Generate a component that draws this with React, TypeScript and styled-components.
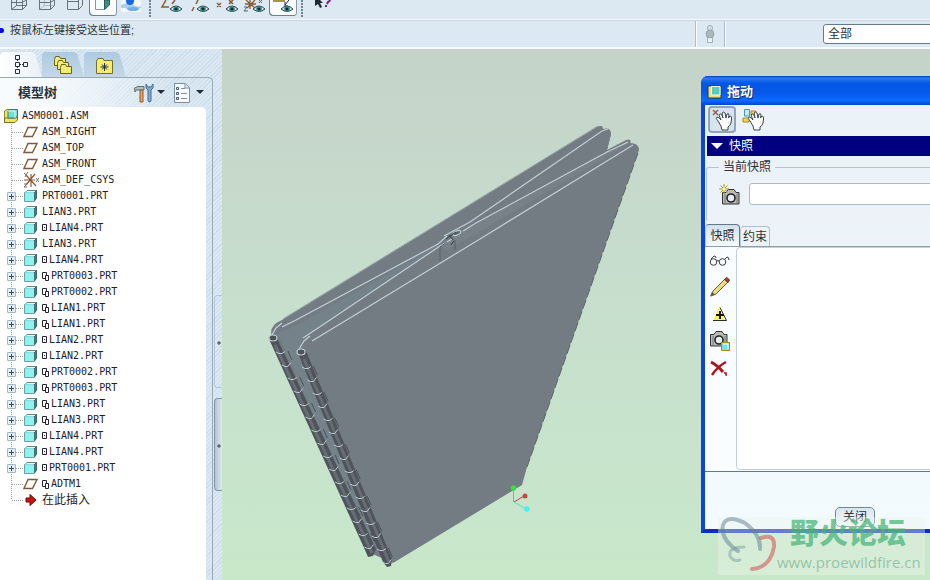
import React from "react";
import styled, { createGlobalStyle, css } from "styled-components";

const GlobalStyle = createGlobalStyle`
  * { box-sizing: border-box; }
  body {
    margin: 0;
    overflow: hidden;
    font: 12px/16px "Liberation Sans", "Noto Sans CJK SC", sans-serif;
    color: #2b333c;
  }
  button, input, select { font: inherit; color: inherit; }
`;

const stripes = css`
  background: repeating-linear-gradient(135deg, #cddfec 0 1px, #dbe8f2 1px 3px);
`;

const Shell = styled.div`
  display: flex;
  flex-direction: column;
  height: 100vh;
  overflow: hidden;
  background: #dce8f2;
`;

const Toolbar = styled.div`
  display: flex;
  height: 20px;
  flex: none;
  padding-left: 5px;
  border-bottom: 1px solid #f8fbfd;
`;

const ToolButton = styled.button<{ $pressed?: boolean }>`
  display: block;
  width: 28px;
  height: 16px;
  padding: 0;
  border: 0;
  border-radius: 0 0 4px 4px;
  background: ${(p) => (p.$pressed ? "#fbfdfe" : "transparent")};
  box-shadow: ${(p) => (p.$pressed ? "inset 1px -1px #6f8191, inset -1px 0 #8798a6" : "none")};
  svg { display: block; }
`;

const Grip = styled.span`
  width: 12px;
  height: 17px;
  background: radial-gradient(circle at 5px 1px, #6f8292 1px, transparent 1px) 0 0 / 12px 3px;
`;

const MessageBar = styled.div`
  display: flex;
  align-items: center;
  height: 29px;
  flex: none;
  border-top: 1px solid #c5d4e0;
  border-bottom: 2px solid #f8fbfd;
`;

const Message = styled.p`
  display: flex;
  align-items: center;
  flex: 1;
  gap: 6px;
  margin: 0;
  padding-bottom: 8px;
  font-size: 11px;
  &::before {
    content: "";
    width: 4px;
    height: 5px;
    border-radius: 0 3px 3px 0;
    background: #0a0ad0;
  }
`;

const FilterArea = styled.div`
  display: flex;
  align-items: center;
  width: 235px;
  height: 100%;
`;

const RegenStatus = styled.div`
  display: flex;
  align-items: center;
  justify-content: center;
  flex: none;
  width: 30px;
  height: 100%;
  border: 1px solid #aebdc9;
  border-width: 0 1px;
  box-shadow: inset 1px 0 #fff, 1px 0 #fff;
`;

const FilterSelect = styled.select`
  flex: none;
  width: 140px;
  height: 20px;
  margin-left: 98px;
  padding: 0 4px;
  appearance: none;
  border: 1px solid #64798a;
  border-radius: 3px;
  background: #fff;
`;

const Workspace = styled.div`
  display: flex;
  flex: 1;
  min-height: 0;
`;

const Navigator = styled.aside`
  display: flex;
  flex: none;
  width: 222px;
  ${stripes}
`;

const NavMain = styled.div`
  display: flex;
  flex-direction: column;
  width: 213px;
`;

const NavTabs = styled.div`
  display: flex;
  height: 28px;
  padding-top: 3px;
`;

const NavTab = styled.button<{ $active?: boolean }>`
  width: 42px;
  padding: 0 10px 0 12px;
  border: 0;
  clip-path: polygon(0 0, 76% 0, 84% 8%, 100% 100%, 0 100%);
  border-radius: 4px 0 0 0;
  background: ${(p) =>
    p.$active ? "linear-gradient(90deg, #fff, #e9f0f6)" : "linear-gradient(#aecae0, #c4d8e7)"};
  svg { display: block; }
`;

const NavPanel = styled.div`
  display: flex;
  flex-direction: column;
  flex: 1;
  min-height: 0;
  padding-right: 6px;
  border: 1px solid #98aaba;
  border-width: 1px 1px 0 0;
  border-radius: 0 5px 0 0;
`;

const NavHeader = styled.header`
  display: flex;
  align-items: center;
  gap: 8px;
  height: 29px;
  flex: none;
  padding: 0 2px 0 18px;
  background: linear-gradient(90deg, #f8fbfd 20%, transparent 80%);
`;

const NavTitle = styled.h1`
  flex: 1;
  margin: 0;
  font-size: 13px;
  line-height: 16px;
`;

const MenuButton = styled.button`
  display: flex;
  align-items: center;
  gap: 3px;
  padding: 0;
  border: 0;
  background: none;
`;

const Tree = styled.ul`
  flex: 1;
  margin: 0;
  padding: 1px 0 0;
  list-style: none;
  border-radius: 0 5px 0 0;
  background: #fff;
`;

const TreeItem = styled.li<{ $root?: boolean; $last?: boolean }>`
  display: flex;
  align-items: center;
  height: 16px;
  padding-left: ${(p) => (p.$root ? "4px" : "7px")};
  font-family: "DejaVu Sans Mono", "Noto Sans CJK SC", monospace;
  white-space: nowrap;
  color: #1e2228;
  background: ${(p) =>
    p.$root
      ? "none"
      : `repeating-linear-gradient(#a0a0a0 0 1px, transparent 1px 2px) 11px 0 / 1px ${p.$last ? "8px" : "16px"} no-repeat,
         repeating-linear-gradient(90deg, #a0a0a0 0 1px, transparent 1px 2px) 12px 8px / 11px 1px no-repeat`};
`;

const ExpandSlot = styled.span`
  display: flex;
  width: 16px;
`;

const ExpandButton = styled.button`
  display: block;
  width: 9px;
  height: 9px;
  padding: 0;
  border: 1px solid #9db6ca;
  border-radius: 1px;
  background:
    linear-gradient(#3a4853, #3a4853) 1px 3px / 5px 1px no-repeat,
    linear-gradient(#3a4853, #3a4853) 3px 1px / 1px 5px no-repeat,
    #e3eef5;
`;

const NodeIcon = styled.span<{ $root?: boolean }>`
  width: ${(p) => (p.$root ? "18px" : "19px")};
  height: 16px;
  flex: none;
  svg { display: block; }
`;

const Marker = styled.svg`
  flex: none;
  margin-right: 1px;
`;

const NodeText = styled.span<{ $cjk?: boolean }>`
  font-size: ${(p) => (p.$cjk ? "12px" : "10px")};
  line-height: 16px;
`;

const Sash = styled.div`
  display: flex;
  flex-direction: column;
  align-items: flex-end;
  flex: 1;
  gap: 10px;
  padding-top: 246px;
`;

const SashHandle = styled.button<{ $solid?: boolean }>`
  width: 8px;
  height: 93px;
  padding: 0;
  border: 1px solid ${(p) => (p.$solid ? "#8496a6" : "#b3c8da")};
  border-right: 0;
  border-radius: 4px 0 0 4px;
  background:
    radial-gradient(circle at 4px 47px, #dfe9f2 0, #26323c 1px, transparent 2px),
    ${(p) => (p.$solid ? "linear-gradient(90deg, #b4c4d2, #dce8f1)" : "none")};
`;

const Viewport = styled.main`
  position: relative;
  flex: 1;
  overflow: hidden;
  background: linear-gradient(#c5d3c9, #c7dfcd 50%, #c8e8ca);
`;

const Model = styled.svg`
  position: absolute;
  left: 38px;
  top: 61px;
`;

const Dialog = styled.section`
  position: absolute;
  left: 479px;
  top: 27px;
  width: 308px;
  border: 4px solid #0a3fd0;
  border-top: 0;
  border-left-color: #0b45dd;
  border-bottom-color: #0a2fb8;
  border-radius: 7px 7px 0 0;
  background: linear-gradient(#eaf1f7, #eef4f9 50%, #f4fbff);
`;

const DialogTitle = styled.header`
  display: flex;
  align-items: center;
  gap: 5px;
  height: 29px;
  margin: 0 -4px;
  padding: 2px 6px 0;
  border-radius: 7px 7px 0 0;
  background: linear-gradient(#0a3fc0 0, #2b7cf5 8%, #0456e4 25%, #0558ea 55%, #0a6bff 85%, #0343c8);
  color: #fff;
  h2 {
    margin: 0;
    font-size: 13px;
    line-height: 20px;
    text-shadow: 1px 1px #0a2a80;
  }
`;

const DialogTools = styled.div`
  display: flex;
  gap: 4px;
  padding: 1px 3px 3px;
`;

const HandButton = styled.button<{ $pressed?: boolean }>`
  width: 28px;
  height: 27px;
  padding: 0;
  border: ${(p) => (p.$pressed ? "2px solid #8fa5b5" : "2px solid transparent")};
  border-radius: 4px;
  background: ${(p) => (p.$pressed ? "#d5e4ef" : "none")};
  svg { display: block; }
`;

const SectionToggle = styled.button`
  display: flex;
  align-items: center;
  gap: 6px;
  width: calc(100% - 4px);
  height: 20px;
  margin-left: 2px;
  padding: 0 4px;
  border: 0;
  background: #000080;
  color: #fff;
`;

const CurrentGroup = styled.fieldset`
  display: flex;
  align-items: center;
  height: 62px;
  margin: 3px 2px 3px 1px;
  padding: 0 6px 8px 12px;
  border: 1px solid #b4c5d2;
  border-width: 1px 1px 0;
  border-radius: 3px;
  legend {
    padding: 0 4px;
  }
`;

const CameraButton = styled.button`
  width: 30px;
  padding: 0;
  border: 0;
  background: none;
  svg { display: block; }
`;

const SnapshotInput = styled.input`
  flex: 1;
  min-width: 0;
  height: 22px;
  border: 1px solid #a5bccb;
  border-radius: 3px;
  background: #fff;
`;

const TabRow = styled.div`
  display: flex;
  align-items: flex-end;
  height: 22px;
`;

const SnapTab = styled.button<{ $active?: boolean }>`
  width: ${(p) => (p.$active ? "35px" : "30px")};
  height: ${(p) => (p.$active ? "22px" : "20px")};
  padding: 0 2px;
  border: 1px solid ${(p) => (p.$active ? "#5f7a8d" : "#a9bdca")};
  border-bottom: 0;
  border-left-color: #b8cad6;
  border-radius: 4px 4px 0 0;
  background: ${(p) => (p.$active ? "linear-gradient(#d3e0ea, #f4f9fc)" : "#edf3f8")};
`;

const TabPanel = styled.div`
  display: flex;
  height: 226px;
  padding-top: 1px;
  border-bottom: 1px solid #5f7a8d;
  background: #fafdff;
  box-shadow: inset 0 1px #8ba0af;
`;

const ActionColumn = styled.div`
  display: flex;
  flex-direction: column;
  width: 31px;
`;

const ActionButton = styled.button`
  width: 30px;
  height: 27px;
  padding: 0 0 2px 4px;
  border: 0;
  background: none;
  svg { display: block; }
`;

const SnapshotList = styled.ul`
  flex: 1;
  margin: 0 0 1px;
  padding: 0;
  list-style: none;
  border: 1px solid #c1d0da;
  border-radius: 4px;
  background: #fff;
`;

const DialogFooter = styled.footer`
  display: flex;
  justify-content: center;
  padding: 35px 0 2px;
`;

const CloseButton = styled.button`
  width: 40px;
  height: 20px;
  padding: 0;
  border: 1px solid #71879a;
  border-radius: 5px;
  background: linear-gradient(#d9e5ee, #f6fafc);
`;

const Watermark = styled.div`
  position: absolute;
  right: 5px;
  bottom: 5px;
  display: flex;
  width: 207px;
  height: 58px;
  background: rgba(235, 245, 235, 0.4);
  svg { flex: none; }
`;

const WatermarkText = styled.div`
  display: flex;
  flex-direction: column;
  strong {
    padding-left: 13px;
    font: 900 29px/28px "Noto Sans CJK SC", sans-serif;
    color: rgba(70, 180, 120, 0.72);
  }
  span {
    font: 15px/34px "Open Sans", sans-serif;
    color: rgba(130, 180, 150, 0.75);
  }
`;

const Eye = ({ x = 15, y = 9 }: { x?: number; y?: number }) => (
  <g transform={`translate(${x} ${y})`}>
    <path d="M-6 0Q0-6 6 0Q0 5-6 0Z" fill="#d6e3e6" stroke="#2c4450" />
    <circle r="2.8" fill="#2f8580" />
    <circle r="1.3" fill="#0b2528" />
  </g>
);

const toolDrawings: Record<string, React.ReactNode> = {
  线框: <path d="M6.500 9.500V0M6.500 9.500H17.500V0M11.500 0V5.500H21.500V0M6.500 9.500L11.500 5.500M17.500 9.500L21.500 5.500M6.500 2.500H17.500L21 0" fill="none" stroke="#68737c" />,
  隐藏线: (
    <g fill="none" stroke="#68737c">
      <path d="M11.500 0V5.500H21M6.500 9.500L11.500 5.500" stroke="#b0bac2" />
      <path d="M6.500 0V9.500H17.500V0M17.500 9.500L21.500 5.500V0M6.500 2.500H17.500L21 0" />
    </g>
  ),
  消隐: <path d="M6.500 0V9.500H17.500V0M17.500 9.500L21.500 5.500V0M6.500 1.500H17.500" fill="none" stroke="#68737c" />,
  着色: (
    <g>
      <path d="M6.500 0V9.500H15.500V0" fill="#f7fcfa" stroke="#8a9599" />
      <path d="M15.500 0V9.500L20.500 5V0Z" fill="#3f8c7e" stroke="#2e5c58" />
    </g>
  ),
  增强: (
    <g>
      <path d="M4 0H24V12H4Z" fill="#f2f7fc" />
      <path d="M4 5Q10 2 16 5T24 6V8Q17 11 11 9T4 8Z" fill="#a9cdf0" />
      <circle cx="13" cy="1" r="4" fill="#1769df" />
      <ellipse cx="16" cy="9" rx="6" ry="2" fill="#6faeea" />
    </g>
  ),
  平面显示: (
    <g>
      <path d="M9 0L5 7H12M15 4L18 0" fill="none" stroke="#8b5a35" strokeWidth="1.5" />
      <Eye x={19} />
    </g>
  ),
  轴显示: (
    <g>
      <path d="M13 0L11 4M9 7L7 11" stroke="#8b5a35" strokeWidth="1.5" />
      <Eye x={18} />
    </g>
  ),
  点显示: (
    <g>
      <path d="M4 3L8 7M8 3L4 7M16 0L20 4M20 0L16 4" stroke="#8b5a35" strokeWidth="1.5" />
      <Eye x={19} />
    </g>
  ),
  坐标系显示: (
    <g>
      <path d="M4 4H15M9 0V9M5 0L14 8M14 0L6 8" stroke="#8b5a35" strokeWidth="1.3" />
      <path d="M3 7H6L3 11H7M18 0L21 3M21 0L18 3" fill="none" stroke="#59636a" />
      <Eye x={18} />
    </g>
  ),
  注释显示: (
    <g>
      <path d="M4 1H16" stroke="#a79b30" strokeWidth="2" />
      <path d="M20 0L16 5M16 2V6H19" fill="none" stroke="#202830" />
      <Eye x={18} />
    </g>
  ),
  帮助: (
    <g>
      <path d="M6 0V6L9 4L11 8L13 7L11 3H14L11 0Z" fill="#1d2830" />
      <path d="M21 0Q21 1 19 2L18 4M17 5V7" fill="none" stroke="#7a1a80" strokeWidth="2" />
    </g>
  ),
};

const Tool = ({ name, pressed }: { name: string; pressed?: boolean }) => (
  <ToolButton aria-label={name} aria-pressed={pressed} $pressed={pressed}>
    <svg width="28" height="16">{toolDrawings[name]}</svg>
  </ToolButton>
);

const Folder = ({ x, y }: { x: number; y: number }) => (
  <path d={`M${x}.5 ${y}.5l1-3h4l1 2h5v7h-11z`} fill="#f5ec78" stroke="#6b6420" />
);

type Kind = "plane" | "csys" | "part" | "insert" | "assembly";
const PartIcon = () => (
  <svg width="16" height="16">
    <path d="M1.500 5L4 2.500H13.500L11 5Z" fill="#d8fbfb" stroke="#5f8588" />
    <path d="M11 5L13.500 2.500V10.500L11 13.500Z" fill="#3f8186" stroke="#3d676b" />
    <path d="M1.500 4.500H11V13.500H1.500Z" fill="#8ef2f0" />
    <path d="M1.500 4.500V13.500H11" fill="none" stroke="#6ba3a6" />
  </svg>
);
const kindIcons: Record<Kind, React.ReactNode> = {
  assembly: (
    <svg width="16" height="16">
      <path d="M.5 3L3 1.500H6V14.500H.5Z" fill="#f2e552" stroke="#9b8d28" />
      <path d="M.5 10H12L13.500 8V12L11 14.500H.5Z" fill="#f2e552" stroke="#77702a" />
      <path d="M5 1.500H13.500V8L11 10H4V3Z" fill="#76ddd8" stroke="#3c7a7a" />
      <path d="M4 3H11V10" fill="none" stroke="#d5fbf6" />
    </svg>
  ),
  plane: (
    <svg width="16" height="16">
      <path d="M5 3.500H14L9.500 12.500H1Z" fill="#fffdf8" stroke="#80583e" strokeWidth="1.400" />
    </svg>
  ),
  csys: (
    <svg width="16" height="16">
      <path d="M1 8H12M8 2V15M3 3L13 14M12 2L3 13" stroke="#8d5734" strokeWidth="1.200" />
      <path d="M1 1L3 3L5 0M3 3L2 5M1 12H4L1 15H4M13 6L16 10M16 6L13 10" fill="none" stroke="#70757a" />
    </svg>
  ),
  part: <PartIcon />,
  insert: (
    <svg width="16" height="16">
      <path d="M3 6H7V2.500L13 8L7 13.500V10H3Z" fill="#d01010" stroke="#6e0808" />
    </svg>
  ),
};

type Mark = "single" | "double";
type Node = { name: string; kind: Kind; mark?: Mark };
const nodes: Node[] = [
  { name: "ASM_RIGHT", kind: "plane" },
  { name: "ASM_TOP", kind: "plane" },
  { name: "ASM_FRONT", kind: "plane" },
  { name: "ASM_DEF_CSYS", kind: "csys" },
  { name: "PRT0001.PRT", kind: "part" },
  { name: "LIAN3.PRT", kind: "part" },
  { name: "LIAN4.PRT", kind: "part", mark: "single" },
  { name: "LIAN3.PRT", kind: "part" },
  { name: "LIAN4.PRT", kind: "part", mark: "single" },
  { name: "PRT0003.PRT", kind: "part", mark: "double" },
  { name: "PRT0002.PRT", kind: "part", mark: "double" },
  { name: "LIAN1.PRT", kind: "part", mark: "double" },
  { name: "LIAN1.PRT", kind: "part", mark: "double" },
  { name: "LIAN2.PRT", kind: "part", mark: "single" },
  { name: "LIAN2.PRT", kind: "part", mark: "single" },
  { name: "PRT0002.PRT", kind: "part", mark: "double" },
  { name: "PRT0003.PRT", kind: "part", mark: "double" },
  { name: "LIAN3.PRT", kind: "part", mark: "double" },
  { name: "LIAN3.PRT", kind: "part", mark: "double" },
  { name: "LIAN4.PRT", kind: "part", mark: "single" },
  { name: "LIAN4.PRT", kind: "part", mark: "single" },
  { name: "PRT0001.PRT", kind: "part", mark: "single" },
  { name: "ADTM1", kind: "plane", mark: "double" },
  { name: "在此插入", kind: "insert" },
];

const PlacementMark = ({ mark }: { mark: Mark }) =>
  mark === "single" ? (
    <Marker width="6" height="8" fill="none" stroke="#20262c">
      <path d="M.5.5H4.500V6.500H.5Z" />
      <path d="M2 3.500H3" />
    </Marker>
  ) : (
    <Marker width="8" height="9" fill="none" stroke="#20262c">
      <path d="M3 6.500H.5V.5H4.500V3M3.500 3.500H6.500V8.500H3.500Z" />
    </Marker>
  );

const hinge = (x0: number, y0: number, slope: number) =>
  Array.from({ length: 16 }, (_, i) => {
    const y = y0 + i * 13;
    const x = x0 + (y - y0) * slope;
    return (
      <g key={i}>
        <path d={`M${x - 4} ${y - 1}l3 1.500h3l3-${i % 2 ? 4 : 2}`} fill="none" stroke="#bccad1" />
        {i % 2 === 1 && <path d={`M${x + 2} ${y - 15}l4 9`} stroke="#4a5258" />}
      </g>
    );
  });

const Assembly = () => (
  <Model width="390" height="470" viewBox="260 110 390 470" role="img" aria-label="装配模型">
    <path
      d="M272 337Q268 326 282 320L597 127Q603 124 603 129Q611 127 611 134L607 150L626 140Q632 138 630 143Q639 143 639 150L527 467L522 485L393 563L368 552Z"
      fill="#737b83"
    />
    <path d="M278 334L303 322L440 244L452 237L303 337L298 350L385 540L370 545Z" fill="#75828a" />
    <path d="M456 233L607 132L611 134L607 150L462 230Z" fill="#737b83" />
    <path d="M460 232L626 141L631 143L448 250L440 246Z" fill="#788187" />
    <path d="M269 339L277 338L376 549L373 556L368 557L365 550Z" fill="#4e545a" />
    <path d="M275 345L372 553" stroke="#666d74" strokeWidth="3" />
    <path d="M298 353L306 351L392 559L391 566L387 567L383 562Z" fill="#4e545a" />
    <path d="M304 359L389 562" stroke="#666d74" strokeWidth="3" />
    <path d="M638 153L527 467" fill="none" stroke="#5b646b" strokeDasharray="9 3" />
    {hinge(280, 353, 0.454)}
    {hinge(306, 368, 0.412)}
    <g fill="none" stroke="#c0cfd8" strokeWidth="1.200">
      <path d="M282 327L296 320L438 244L447 236M272 335L276 328L282 323" />
      <path d="M303 338L330 320L440 246L452 239M299 349L304 341L310 336" />
      <path d="M312 341L480 239L633 145" />
      <path d="M444 236L470 222L602 131L608 129" />
      <path d="M463 231L476 223L607 152L628 142" />
      <path d="M283 319L598 126" stroke="#8f9aa0" strokeWidth="1" />
      <ellipse cx="273" cy="338" rx="4" ry="3" fill="#4b545b" />
      <ellipse cx="301" cy="352" rx="4" ry="3" fill="#4b545b" />
      <ellipse cx="457" cy="233" rx="4" ry="2" transform="rotate(-25 457 233)" fill="#58636b" />
    </g>
    <path d="M440 261V247L447 242M455 250V240" fill="none" stroke="#58636b" />
    <path d="M449 235L453 240M451 245L454 241M446 239L456 232" fill="none" stroke="#343f47" />
    <path d="M513.500 502V489" stroke="#3ce04a" />
    <path d="M514 502L524 496" stroke="#b44448" />
    <path d="M514 502L526 509" stroke="#55dede" />
    <circle cx="513.500" cy="488" r="2.800" fill="#34e43c" />
    <circle cx="525" cy="496" r="2.500" fill="#d04448" />
    <circle cx="527" cy="509" r="2.800" fill="#48f2f4" />
  </Model>
);

const HandPath = () => (
  <path
    d="M8 13Q5 10 7 9Q9 9 11 12L9 7Q10 5 12 7L13 10L12 5Q14 3 15 5L16 10L17 6Q19 5 19 7L18.500 10L20 8Q22 8 21.500 11L21 15Q20 18 18 19V22H12L11 18Z"
    fill="#fffdfb"
    stroke="#3b454d"
  />
);

const Camera = ({ x = 0, y = 0 }: { x?: number; y?: number }) => (
  <g transform={`translate(${x} ${y})`}>
    <path d="M1.500 3.500H5L7 .5H13L15 3.500H18V15H1.500Z" fill="#bcbcb4" stroke="#30343a" />
    <path d="M4 5V14M16 5V14" stroke="#77786f" />
    <circle cx="10" cy="9" r="4" fill="#e9edef" stroke="#1f252b" strokeWidth="1.600" />
  </g>
);

const actionIcons: [string, React.ReactNode][] = [
  [
    "显示快照",
    <g fill="none" stroke="#3a3d40">
      <circle cx="4.500" cy="13" r="3.300" />
      <circle cx="13.500" cy="13" r="3.300" />
      <path d="M8 12Q9 11 10 12M2 10L5 7Q7 7 7 9M16 10L18 8Q20 8 20 11" />
    </g>,
  ],
  [
    "编辑快照",
    <g>
      <path d="M2 20L4 15L16 3L19 6L7 18Z" fill="#e9dc80" stroke="#6a6236" />
      <path d="M15.500 3.500L18 1.500L20.500 4L19 6.500Z" fill="#a5483f" stroke="#5d2522" />
      <path d="M1 20.500L3 16L6 18.500Z" fill="#5c584c" />
    </g>,
  ],
  [
    "锁定",
    <g>
      <path d="M10 4L16 18H4Z" fill="#f8f83c" />
      <path d="M11 4.500L17.500 17.500H4" fill="none" stroke="#2f301b" />
      <path d="M7 12H15M11 8V16" stroke="#14160c" strokeWidth="2" />
    </g>,
  ],
  [
    "绘图快照",
    <g>
      <Camera x={0} y={1} />
      <path d="M12.500 12.500H20.500V20.500H12.500Z" fill="#7ee3df" stroke="#9b8d28" />
      <path d="M14 14H19V19" fill="none" stroke="#eafffb" />
    </g>,
  ],
  [
    "删除",
    <g fill="none" stroke="#ad1518">
      <path d="M2 5Q8 8 14 15" strokeWidth="3" />
      <path d="M17 5Q9 9 3 18" strokeWidth="2.500" />
      <path d="M15 16H17V18H18" strokeWidth="1.500" />
    </g>,
  ],
];

const Caret = () => (
  <svg width="8" height="5">
    <path d="M0 0H8L4 4Z" fill="#1f2c36" />
  </svg>
);

export default function App() {
  return (
    <Shell>
      <GlobalStyle />
      <Toolbar>
        <Tool name="线框" />
        <Tool name="隐藏线" />
        <Tool name="消隐" />
        <Tool name="着色" pressed />
        <Tool name="增强" />
        <Grip />
        <Tool name="平面显示" />
        <Tool name="轴显示" />
        <Tool name="点显示" />
        <Tool name="坐标系显示" />
        <Tool name="注释显示" pressed />
        <Grip />
        <Tool name="帮助" />
      </Toolbar>
      <MessageBar>
        <Message>按鼠标左键接受这些位置;</Message>
        <FilterArea>
          <RegenStatus>
            <svg width="12" height="20">
              <circle cx="6" cy="4" r="2.500" fill="#d8e1e6" stroke="#a1adb5" />
              <path d="M3.500 13H8.500V18.500H3.500Z" fill="#edf2f5" stroke="#a1adb5" />
              <circle cx="6" cy="10" r="4" fill="#adb8bf" stroke="#9aa6ae" />
            </svg>
          </RegenStatus>
          <FilterSelect aria-label="选择过滤器" defaultValue="全部">
            <option>全部</option>
          </FilterSelect>
        </FilterArea>
      </MessageBar>
      <Workspace>
        <Navigator>
          <NavMain>
            <NavTabs>
              <NavTab $active aria-label="模型树">
                <svg width="20" height="22" fill="none" stroke="#26323c">
                  <path d="M3.500 1.500H7.500V5.500H3.500ZM3.500 8.500H7.500V12.500H3.500ZM3.500 15.500H7.500V19.500H3.500ZM11.500 8.500H15.500V12.500H11.500Z" />
                  <path d="M8 10.500H11M5.500 6V8M5.500 13V15" strokeDasharray="1 1" />
                </svg>
              </NavTab>
              <NavTab aria-label="文件夹浏览器">
                <svg width="20" height="22">
                  <Folder x={0} y={5} />
                  <Folder x={3} y={9} />
                  <Folder x={6} y={13} />
                </svg>
              </NavTab>
              <NavTab aria-label="收藏夹">
                <svg width="20" height="22">
                  <path d="M.5 7L2 4.500H7L8 6.500H16.500V19.500H.5Z" fill="#f8ec6c" stroke="#756e32" />
                  <path d="M8.500 9V17M4.500 13H12.500M6 10.500L11 15.500M11 10.500L6 15.500" stroke="#18304e" />
                </svg>
              </NavTab>
            </NavTabs>
            <NavPanel>
              <NavHeader>
                <NavTitle>模型树</NavTitle>
                <MenuButton aria-label="设置">
                  <svg width="20" height="20">
                    <path d="M.5 5L4 3.500H10V7H2L1 9Z" fill="#aebfc0" stroke="#617073" />
                    <path d="M6 7H9V19H6Z" fill="#e8a468" stroke="#8c5a2b" />
                    <path d="M12 1V5L14 7V18Q15.500 20 17 18V7L19 5V1L17 4H14Z" fill="#7ea9da" stroke="#4d6888" />
                  </svg>
                  <Caret />
                </MenuButton>
                <MenuButton aria-label="显示">
                  <svg width="20" height="20">
                    <path d="M1.500.5H12L16.500 4.500V19.500H1.500Z" fill="#f5f9fc" stroke="#7b8f9f" />
                    <path d="M8 5.500H12M8 10.500H14M8 15.500H14M12 1V5H16" fill="none" stroke="#7b8f9f" />
                    <path d="M3.500 4.500H5.500V6.500H3.500ZM3.500 9.500H5.500V11.500H3.500ZM3.500 14.500H5.500V16.500H3.500Z" fill="none" stroke="#4a5964" />
                  </svg>
                  <Caret />
                </MenuButton>
              </NavHeader>
              <Tree>
                <TreeItem $root>
                  <NodeIcon $root>{kindIcons.assembly}</NodeIcon>
                  <NodeText>ASM0001.ASM</NodeText>
                </TreeItem>
                {nodes.map((n, i) => (
                  <TreeItem key={i} $last={i === nodes.length - 1}>
                    <ExpandSlot>
                      {n.kind === "part" && <ExpandButton aria-label={`展开 ${n.name}`} />}
                    </ExpandSlot>
                    <NodeIcon>{kindIcons[n.kind]}</NodeIcon>
                    {n.mark && <PlacementMark mark={n.mark} />}
                    <NodeText $cjk={n.kind === "insert"}>{n.name}</NodeText>
                  </TreeItem>
                ))}
              </Tree>
            </NavPanel>
          </NavMain>
          <Sash>
            <SashHandle aria-label="展开浏览器" />
            <SashHandle $solid aria-label="折叠导航器" />
          </Sash>
        </Navigator>
        <Viewport>
          <Assembly />
          <Dialog role="dialog" aria-labelledby="drag-title">
            <DialogTitle>
              <svg width="15" height="14">
                <path d="M1 1H14V13H1Z" fill="#eadf76" stroke="#2f3b35" />
                <path d="M4.500 1.500H13V10H4.500Z" fill="#5cc9c2" stroke="#e2fff8" />
              </svg>
              <h2 id="drag-title">拖动</h2>
            </DialogTitle>
            <DialogTools>
              <HandButton $pressed aria-label="点拖动" aria-pressed>
                <svg width="24" height="23">
                  <path d="M3 2L8 7M8 2L3 7" stroke="#8a6650" strokeWidth="1.500" />
                  <HandPath />
                </svg>
              </HandButton>
              <HandButton aria-label="主体拖动">
                <svg width="24" height="23">
                  <path d="M2.500 1.500H7.500V8H2.500Z" fill="#b9effa" stroke="#3b9bb8" />
                  <path d="M9 3H14V7H9ZM1 10H7V14H1Z" fill="#f5d84c" stroke="#a58a22" />
                  <HandPath />
                </svg>
              </HandButton>
            </DialogTools>
            <SectionToggle aria-expanded>
              <svg width="12" height="7">
                <path d="M0 0H12L6 6Z" fill="#fff" />
              </svg>
              快照
            </SectionToggle>
            <CurrentGroup>
              <legend>当前快照</legend>
              <CameraButton aria-label="拍摄快照">
                <svg width="22" height="22">
                  <Camera x={2} y={6} />
                  <path d="M5 1V11M0 6H10M1.500 2.500L8.500 9.500M8.500 2.500L1.500 9.500" stroke="#a89428" />
                  <circle cx="5" cy="6" r="1.500" fill="#fff8a0" />
                </svg>
              </CameraButton>
              <SnapshotInput aria-label="当前快照名称" />
            </CurrentGroup>
            <TabRow>
              <SnapTab $active>快照</SnapTab>
              <SnapTab>约束</SnapTab>
            </TabRow>
            <TabPanel>
              <ActionColumn>
                {actionIcons.map(([label, icon]) => (
                  <ActionButton key={label} aria-label={label}>
                    <svg width="22" height="22">{icon}</svg>
                  </ActionButton>
                ))}
              </ActionColumn>
              <SnapshotList aria-label="快照列表" />
            </TabPanel>
            <DialogFooter>
              <CloseButton>关闭</CloseButton>
            </DialogFooter>
          </Dialog>
          <Watermark>
            <svg width="59" height="58" fill="none" strokeLinecap="round">
              <path d="M42 32Q43 18 27 6Q9-3 5 8Q2 22 20 34" stroke="rgba(95,125,145,.5)" strokeWidth="4" />
              <path d="M26 30Q10 30 12 39Q15 45 22 43" stroke="rgba(120,150,150,.45)" strokeWidth="3" />
              <path d="M43 21Q57 16 56 30Q52 51 34 52" stroke="rgba(210,80,80,.55)" strokeWidth="4" />
            </svg>
            <WatermarkText>
              <strong>野火论坛</strong>
              <span>www.proewildfire.cn</span>
            </WatermarkText>
          </Watermark>
        </Viewport>
      </Workspace>
    </Shell>
  );
}
